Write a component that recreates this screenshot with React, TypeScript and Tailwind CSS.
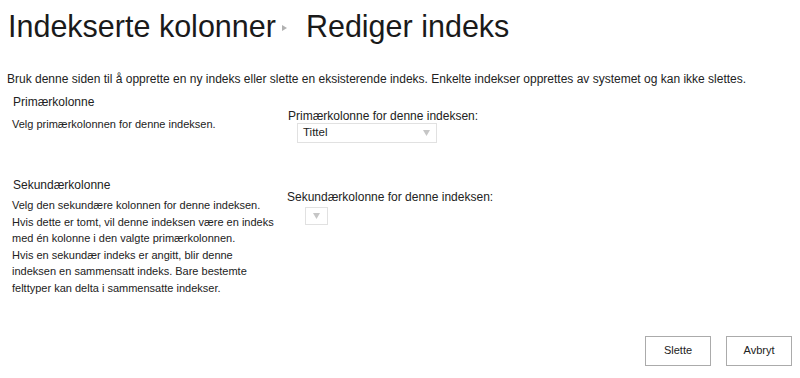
import React from 'react';

const font = { fontFamily: '"Liberation Sans", Arial, sans-serif' };

const SelectArrow = () => (
    <svg width="7" height="6" viewBox="0 0 7 6" className="shrink-0">
        <path d="M0 0 L7 0 L3.5 6 Z" fill="#c6c6c6" />
    </svg>
);

export default function App() {
    return (
        <div className="w-[800px] h-[378px] bg-white text-[#222] overflow-hidden" style={font}>
            {/* Page title */}
            <div className="flex items-center pl-[8px] pt-[8px] h-[44px] whitespace-nowrap">
                <span className="text-[30.5px] leading-none text-[#1a1a1a]">Indekserte kolonner</span>
                <svg width="5" height="6" viewBox="0 0 5 6" className="ml-[6px] mr-[19px] mt-[3px]">
                    <path d="M0 0 L5 3 L0 6 Z" fill="#b1b1b1" />
                </svg>
                <span className="text-[30.5px] leading-none text-[#1a1a1a]">Rediger indeks</span>
            </div>

            <p className="pl-[7px] mt-[27px] text-[12px] leading-[16px] whitespace-nowrap">
                Bruk denne siden til å opprette en ny indeks eller slette en eksisterende indeks. Enkelte indekser opprettes av systemet og kan ikke slettes.
            </p>

            {/* Primary column */}
            <div className="flex mt-[7px]">
                <div className="w-[280px] pl-[12px] shrink-0">
                    <div className="text-[12px] leading-[16px] pl-[1px]">Primærkolonne</div>
                    <div className="text-[11px] leading-[16px] mt-[6px]">Velg primærkolonnen for denne indeksen.</div>
                </div>
                <div className="pl-[8px] pt-[15px]">
                    <div className="text-[12px] leading-[14px] whitespace-nowrap">Primærkolonne for denne indeksen:</div>
                    <div className="ml-[9px] w-[140px] h-[20px] border border-[#e1e1e1] flex items-center justify-between pl-[5px] pr-[6px]">
                        <span className="text-[11.5px]">Tittel</span>
                        <SelectArrow />
                    </div>
                </div>
            </div>

            {/* Secondary column */}
            <div className="flex mt-[34px]">
                <div className="w-[280px] pl-[12px] shrink-0">
                    <div className="text-[12px] leading-[16px] pl-[1px]">Sekundærkolonne</div>
                    <div className="text-[11px] leading-[16.6px] mt-[4px] whitespace-nowrap">
                        Velg den sekundære kolonnen for denne indeksen.
                        <br />
                        Hvis dette er tomt, vil denne indeksen være en indeks
                        <br />
                        med én kolonne i den valgte primærkolonnen.
                        <br />
                        Hvis en sekundær indeks er angitt, blir denne
                        <br />
                        indeksen en sammensatt indeks. Bare bestemte
                        <br />
                        felttyper kan delta i sammensatte indekser.
                    </div>
                </div>
                <div className="pl-[7px] pt-[12px]">
                    <div className="text-[12px] leading-[16px] whitespace-nowrap">Sekundærkolonne for denne indeksen:</div>
                    <div className="ml-[18px] mt-[2px] w-[23px] h-[18px] border border-[#e1e1e1] flex items-center justify-center">
                        <SelectArrow />
                    </div>
                </div>
            </div>

            {/* Buttons */}
            <div className="flex justify-end gap-[15px] pr-[8px] mt-[39px]">
                <button className="w-[66px] h-[30px] border border-[#ababab] bg-white text-[11px]">Slette</button>
                <button className="w-[66px] h-[30px] border border-[#ababab] bg-white text-[11px]">Avbryt</button>
            </div>
        </div>
    );
}
